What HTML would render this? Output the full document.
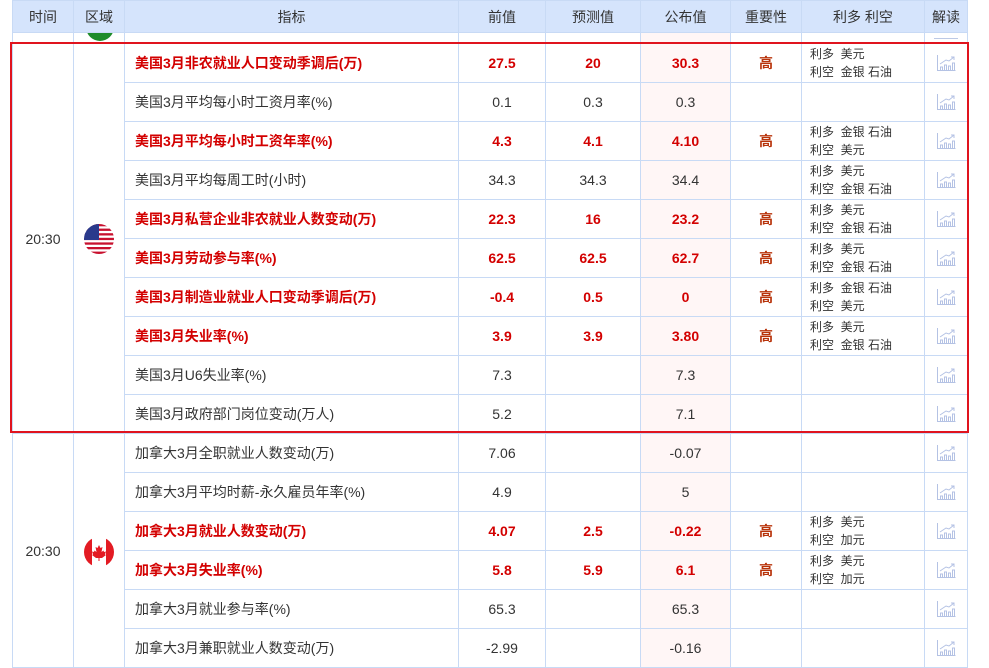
<!DOCTYPE html><html><head><meta charset="utf-8"><style>
body{margin:0;background:#fff;width:989px;height:667px;overflow:hidden;position:relative;font-family:"Liberation Sans","Noto Sans CJK SC",sans-serif;font-size:14px;color:#333}
table{position:absolute;left:12px;top:0;border-collapse:collapse;table-layout:fixed;width:955px}
td,th{border:1px solid #c8daf5;padding:0;text-align:center;height:38px;overflow:hidden;white-space:nowrap}
th{background:#d5e4fc;height:31px;font-weight:normal;color:#333;font-size:14px}
td.n{text-align:left;padding-left:10px}
td.p{background:#fff6f6}
.r{color:#d30000;font-weight:bold}
.r td.h{color:#b8330a}
tr td.l{text-align:left;padding-left:8px;font-size:12px;line-height:18px;white-space:pre;font-weight:normal;color:#333}
tr.s td{height:10px}
.box{position:absolute;left:10px;top:42px;width:955px;height:387px;border:2px solid #e0141e}
.flag{width:30px;height:30px;border-radius:50%;display:inline-block;vertical-align:middle;overflow:hidden}
</style></head><body>
<table>
<colgroup><col style="width:61px"><col style="width:51px"><col style="width:334px"><col style="width:87px"><col style="width:95px"><col style="width:90px"><col style="width:71px"><col style="width:123px"><col style="width:43px"></colgroup>
<tr><th>时间</th><th>区域</th><th>指标</th><th>前值</th><th>预测值</th><th>公布值</th><th>重要性</th><th>利多 利空</th><th>解读</th></tr>
<tr class="s"><td></td><td style="position:relative"><div style="position:absolute;left:12px;top:-10px;width:28px;height:18px;border-radius:0 0 14px 14px;background:#1e8c2a"></div></td><td></td><td></td><td></td><td class="p"></td><td></td><td></td><td><div style="margin:0 auto;width:24px;border-top:1px solid #bcc9e6"></div></td></tr>
<tr class="r"><td rowspan="10" style="font-weight:normal;color:#333">20:30</td><td rowspan="10"><svg class="flag" viewBox="0 0 30 30"><rect width="30" height="30" fill="#fff"/><g fill="#c8102e"><rect y="0" width="30" height="2.3"/><rect y="4.6" width="30" height="2.3"/><rect y="9.2" width="30" height="2.3"/><rect y="13.8" width="30" height="2.3"/><rect y="18.4" width="30" height="2.3"/><rect y="23" width="30" height="2.3"/><rect y="27.6" width="30" height="2.4"/></g><rect width="15" height="16" fill="#2a3a8c"/></svg></td><td class="n">美国3月非农就业人口变动季调后(万)</td><td>27.5</td><td>20</td><td class="p">30.3</td><td class="h">高</td><td class="l">利多  美元
利空  金银 石油</td><td>I</td></tr>
<tr><td class="n">美国3月平均每小时工资月率(%)</td><td>0.1</td><td>0.3</td><td class="p">0.3</td><td></td><td></td><td>I</td></tr>
<tr class="r"><td class="n">美国3月平均每小时工资年率(%)</td><td>4.3</td><td>4.1</td><td class="p">4.10</td><td class="h">高</td><td class="l">利多  金银 石油
利空  美元</td><td>I</td></tr>
<tr><td class="n">美国3月平均每周工时(小时)</td><td>34.3</td><td>34.3</td><td class="p">34.4</td><td></td><td class="l">利多  美元
利空  金银 石油</td><td>I</td></tr>
<tr class="r"><td class="n">美国3月私营企业非农就业人数变动(万)</td><td>22.3</td><td>16</td><td class="p">23.2</td><td class="h">高</td><td class="l">利多  美元
利空  金银 石油</td><td>I</td></tr>
<tr class="r"><td class="n">美国3月劳动参与率(%)</td><td>62.5</td><td>62.5</td><td class="p">62.7</td><td class="h">高</td><td class="l">利多  美元
利空  金银 石油</td><td>I</td></tr>
<tr class="r"><td class="n">美国3月制造业就业人口变动季调后(万)</td><td>-0.4</td><td>0.5</td><td class="p">0</td><td class="h">高</td><td class="l">利多  金银 石油
利空  美元</td><td>I</td></tr>
<tr class="r"><td class="n">美国3月失业率(%)</td><td>3.9</td><td>3.9</td><td class="p">3.80</td><td class="h">高</td><td class="l">利多  美元
利空  金银 石油</td><td>I</td></tr>
<tr><td class="n">美国3月U6失业率(%)</td><td>7.3</td><td></td><td class="p">7.3</td><td></td><td></td><td>I</td></tr>
<tr><td class="n">美国3月政府部门岗位变动(万人)</td><td>5.2</td><td></td><td class="p">7.1</td><td></td><td></td><td>I</td></tr>
<tr><td rowspan="6" style="vertical-align:top;padding-top:109px;height:auto">20:30</td><td rowspan="6" style="vertical-align:top;padding-top:103px"><svg class="flag" viewBox="0 0 30 30"><rect width="30" height="30" fill="#fff"/><rect width="8" height="30" fill="#e31b23"/><rect x="22" width="8" height="30" fill="#e31b23"/><path d="M15 8l1.5 3 2-1-1 5 2-1.5.5 1.5 2-.5-1 3 1 .5-4 3h-2.5v3h-1v-3H12l-4-3 1-.5-1-3 2 .5.5-1.5 2 1.5-1-5 2 1z" fill="#e31b23"/></svg></td><td class="n">加拿大3月全职就业人数变动(万)</td><td>7.06</td><td></td><td class="p">-0.07</td><td></td><td></td><td>I</td></tr>
<tr><td class="n">加拿大3月平均时薪-永久雇员年率(%)</td><td>4.9</td><td></td><td class="p">5</td><td></td><td></td><td>I</td></tr>
<tr class="r"><td class="n">加拿大3月就业人数变动(万)</td><td>4.07</td><td>2.5</td><td class="p">-0.22</td><td class="h">高</td><td class="l">利多  美元
利空  加元</td><td>I</td></tr>
<tr class="r"><td class="n">加拿大3月失业率(%)</td><td>5.8</td><td>5.9</td><td class="p">6.1</td><td class="h">高</td><td class="l">利多  美元
利空  加元</td><td>I</td></tr>
<tr><td class="n">加拿大3月就业参与率(%)</td><td>65.3</td><td></td><td class="p">65.3</td><td></td><td></td><td>I</td></tr>
<tr><td class="n">加拿大3月兼职就业人数变动(万)</td><td>-2.99</td><td></td><td class="p">-0.16</td><td></td><td></td><td>I</td></tr>
</table>
<div class="box"></div>
<script>
document.querySelectorAll('td').forEach(function(t){if(t.textContent==='I'){t.innerHTML='<svg width="20" height="18" viewBox="0 0 20 18" style="vertical-align:middle"><g fill="none" stroke="#b4c2e4" stroke-width="1"><path d="M1.5 1v15.5h18"/><path d="M4.5 16v-3h2v3M8.5 16v-5h2v5M12.5 16v-4h2v4M16.5 16v-7h2v7"/><path d="M4 10l6-4 3 1 5-4"/><path d="M15 3h3v3"/></g></svg>';}});
</script>
</body></html>
